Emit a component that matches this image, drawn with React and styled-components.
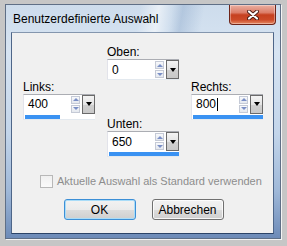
import React from 'react';
import styled, { createGlobalStyle } from 'styled-components';

const GlobalStyle = createGlobalStyle`
    html, body {
        margin: 0;
        padding: 0;
        background: #c6c6c6;
        overflow: hidden;
    }
    body {
        font-family: "Liberation Sans", Arial, sans-serif;
        font-size: 12px;
        color: #000;
    }
`;

const Screen = styled.div`
    width: 287px;
    height: 246px;
    box-sizing: border-box;
    padding: 4px 6px 7px 5px;
`;

const Window = styled.div`
    height: 100%;
    box-sizing: border-box;
    display: flex;
    flex-direction: column;
    padding: 0 6px 4px 5px;
    border: 1px solid #5f6f86;
    box-shadow: 1px 1px 0 #f4f4f4;
    background: linear-gradient(180deg, #cddcec 0%, #d7e4f2 20%, #c3d5ea 55%, #9fb8d8 80%, #6d8bb8 100%);
`;

const TitleBar = styled.div`
    height: 27px;
    display: flex;
    justify-content: space-between;
    align-items: flex-start;
    margin: 0 -2px 0 0;
    background: linear-gradient(100deg, transparent 48%, rgba(255, 255, 255, 0.55) 55%, transparent 60%, rgba(80, 120, 170, 0.22) 64%, transparent 72%);
`;

const Title = styled.div`
    padding: 7px 0 0 2px;
    line-height: 14px;
    font-size: 12px;
`;

const CloseButton = styled.div`
    width: 45px;
    height: 19px;
    display: flex;
    align-items: center;
    justify-content: center;
    border: 1px solid #6e2418;
    border-top: none;
    border-radius: 0 0 4px 4px;
    background: linear-gradient(180deg, #eab0a2 0%, #dc7d68 40%, #c6401f 52%, #cc4a28 78%, #e68a63 100%);
    box-shadow: inset 0 0 0 1px rgba(255, 255, 255, 0.35);
`;

const Panel = styled.div`
    flex: 1;
    display: flex;
    flex-direction: column;
    background: #f0f0f0;
    border: 1px solid #4e6689;
    border-top-color: #8496ae;
    border-bottom-color: #2c4468;
`;

const Fields = styled.div`
    display: flex;
    align-items: center;
    gap: 12px;
    padding: 12px 0 0 11px;
`;

const Column = styled.div`
    width: 72px;
    display: flex;
    flex-direction: column;
    margin-bottom: ${(p) => (p.$side ? '3px' : '0')};
`;

const Label = styled.div`
    line-height: 14px;
    height: 14px;
    margin-top: ${(p) => p.$gap || 0}px;
`;

const Control = styled.div`
    display: flex;
    flex-direction: column;
    background: #fff;
    border: 1px solid;
    border-color: #abadb3 #dbdfe6 #e3e9ef #e2e3ea;
    border-right: none;
`;

const Row = styled.div`
    display: flex;
    height: 19px;
`;

const Value = styled.div`
    flex: 1;
    display: flex;
    align-items: center;
    padding-left: 4px;
    line-height: 14px;
`;

const Caret = styled.span`
    display: inline-block;
    width: 1px;
    height: 13px;
    margin-left: 1px;
    background: #000;
`;

const Spinner = styled.div`
    display: flex;
    flex-direction: column;
    justify-content: center;
    gap: 1px;
    margin-left: auto;
    margin-right: 2px;
`;

const SpinButton = styled.div`
    width: 7px;
    height: 6px;
    display: flex;
    align-items: center;
    justify-content: center;
    border: 1px solid #c5cad6;
    background: linear-gradient(180deg, #f8f9fb, #e4e8ef);
`;

const SpinArrow = styled.span`
    width: 0;
    height: 0;
    border-left: 3px solid transparent;
    border-right: 3px solid transparent;
    ${(p) => (p.$up ? 'border-bottom: 3px solid #7a8fc6;' : 'border-top: 3px solid #7a8fc6;')}
`;

const DropButton = styled.div`
    width: 11px;
    display: flex;
    align-items: center;
    justify-content: center;
    border: 1px solid #6a6a6a;
    background: linear-gradient(180deg, #f4f4f4 0%, #e4e4e4 50%, #d0d0d0 51%, #c8c8c8 100%);
`;

const DropArrow = styled.span`
    width: 0;
    height: 0;
    border-left: 3px solid transparent;
    border-right: 3px solid transparent;
    border-top: 4px solid #000;
`;

const Bar = styled.div`
    height: 4px;
    padding: 1px 0 0 1px;
    background: #fff;
`;

const Fill = styled.div`
    height: 100%;
    background: #3a92f2;
`;

const CheckRow = styled.div`
    display: flex;
    align-items: center;
    margin-top: 18px;
    padding-left: 28px;
    height: 13px;
`;

const CheckBox = styled.div`
    width: 11px;
    height: 11px;
    flex-shrink: 0;
    border: 1px solid #b8b8b8;
    background: linear-gradient(180deg, #f0f0f0, #fafafa);
`;

const CheckLabel = styled.span`
    margin-left: 4px;
    color: #8d8d8d;
    font-size: 11px;
    line-height: 13px;
    white-space: nowrap;
`;

const Buttons = styled.div`
    display: flex;
    justify-content: center;
    gap: 16px;
    margin-top: 11px;
    padding-left: 2px;
`;

const Button = styled.div`
    width: 70px;
    height: 19px;
    display: flex;
    align-items: center;
    justify-content: center;
    border: 1px solid ${(p) => (p.$default ? '#3c8fd6' : '#707070')};
    border-radius: 3px;
    background: linear-gradient(180deg, #f2f2f2 0%, #ebebeb 50%, #dddddd 51%, #cfcfcf 100%);
    box-shadow: inset 0 0 0 1px ${(p) => (p.$default ? '#a9dcf8' : 'rgba(255,255,255,0.8)')};
`;

const CloseIcon = () => (
    <svg width="12" height="10" viewBox="0 0 12 10">
        <path d="M2 1.5 L10 8.5 M10 1.5 L2 8.5" stroke="#4a1a12" strokeWidth="4" strokeLinecap="round" />
        <path d="M2 1.5 L10 8.5 M10 1.5 L2 8.5" stroke="#fff" strokeWidth="2.2" strokeLinecap="round" />
    </svg>
);

const NumberField = ({ value, fill, focused }) => (
    <Control>
        <Row>
            <Value>
                {value}
                {focused && <Caret />}
                <Spinner>
                    <SpinButton><SpinArrow $up /></SpinButton>
                    <SpinButton><SpinArrow /></SpinButton>
                </Spinner>
            </Value>
            <DropButton><DropArrow /></DropButton>
        </Row>
        {fill > 0 && (
            <Bar>
                <Fill style={{ width: `${fill * 100}%` }} />
            </Bar>
        )}
    </Control>
);

const App = () => {
    const max = 800;
    return (
        <>
            <GlobalStyle />
            <Screen>
                <Window>
                    <TitleBar>
                        <Title>Benutzerdefinierte Auswahl</Title>
                        <CloseButton><CloseIcon /></CloseButton>
                    </TitleBar>
                    <Panel>
                        <Fields>
                            <Column $side>
                                <Label>Links:</Label>
                                <NumberField value="400" fill={400 / max} />
                            </Column>
                            <Column>
                                <Label>Oben:</Label>
                                <NumberField value="0" fill={0} />
                                <Label $gap={37}>Unten:</Label>
                                <NumberField value="650" fill={1} />
                            </Column>
                            <Column $side>
                                <Label>Rechts:</Label>
                                <NumberField value="800" fill={800 / max} focused />
                            </Column>
                        </Fields>
                        <CheckRow>
                            <CheckBox />
                            <CheckLabel>Aktuelle Auswahl als Standard verwenden</CheckLabel>
                        </CheckRow>
                        <Buttons>
                            <Button $default>OK</Button>
                            <Button>Abbrechen</Button>
                        </Buttons>
                    </Panel>
                </Window>
            </Screen>
        </>
    );
};

export default App;
